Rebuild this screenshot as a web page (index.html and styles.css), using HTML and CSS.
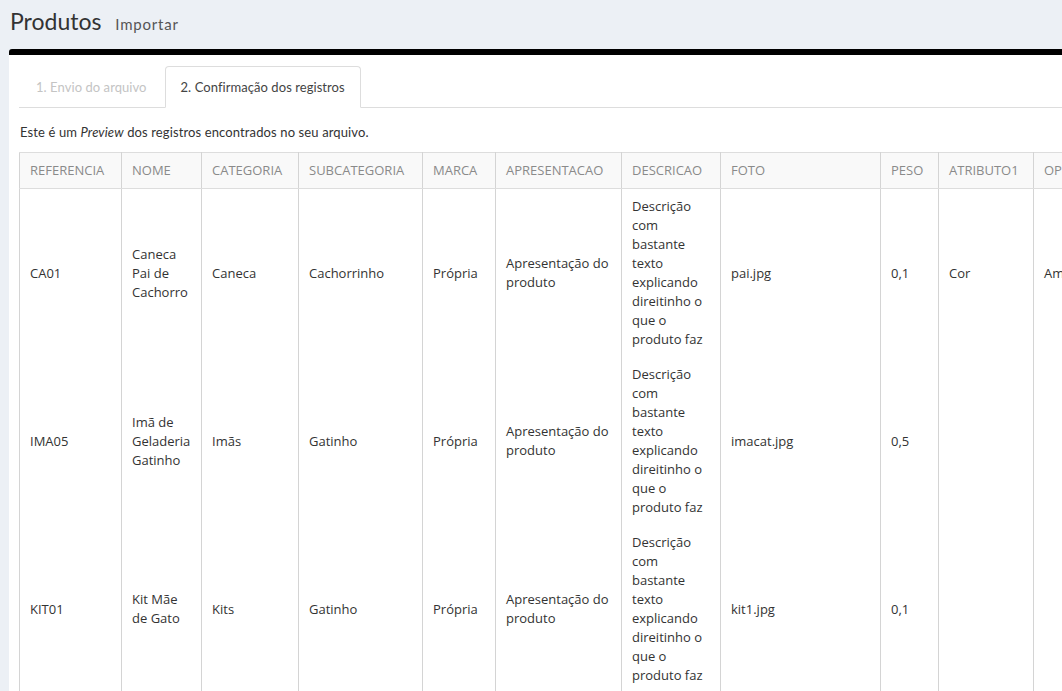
FILE: index.html
```html
<!DOCTYPE html>
<html lang="pt-BR">
<head>
<meta charset="utf-8">
<title>Produtos - Importar</title>
<link rel="stylesheet" href="styles.css">
</head>
<body>
<header class="page-header">
  <h1 class="title">Produtos <small class="subtitle">Importar</small></h1>
</header>
<section class="box">
  <ul class="tabs">
    <li class="tab">1. Envio do arquivo</li>
    <li class="tab active">2. Confirmação dos registros</li>
  </ul>
  <p class="intro">Este é um <em>Preview</em> dos registros encontrados no seu arquivo.</p>
  <table class="grid">
    <colgroup>
      <col class="c1"><col class="c2"><col class="c3"><col class="c4"><col class="c5"><col class="c6"><col class="c7"><col class="c8"><col class="c9"><col class="c10"><col class="c11">
    </colgroup>
    <thead>
      <tr>
        <th>REFERENCIA</th><th>NOME</th><th>CATEGORIA</th><th>SUBCATEGORIA</th><th>MARCA</th><th>APRESENTACAO</th><th>DESCRICAO</th><th>FOTO</th><th>PESO</th><th>ATRIBUTO1</th><th>OPCAO1</th>
      </tr>
    </thead>
    <tbody>
      <tr>
        <td>CA01</td><td>Caneca Pai de Cachorro</td><td>Caneca</td><td>Cachorrinho</td><td>Própria</td><td>Apresentação do produto</td><td>Descrição com bastante texto explicando direitinho o que o produto faz</td><td>pai.jpg</td><td>0,1</td><td>Cor</td><td>Amarelo</td>
      </tr>
      <tr>
        <td>IMA05</td><td>Imã de Geladeria Gatinho</td><td>Imãs</td><td>Gatinho</td><td>Própria</td><td>Apresentação do produto</td><td>Descrição com bastante texto explicando direitinho o que o produto faz</td><td>imacat.jpg</td><td>0,5</td><td></td><td></td>
      </tr>
      <tr>
        <td>KIT01</td><td>Kit Mãe de Gato</td><td>Kits</td><td>Gatinho</td><td>Própria</td><td>Apresentação do produto</td><td>Descrição com bastante texto explicando direitinho o que o produto faz</td><td>kit1.jpg</td><td>0,1</td><td></td><td></td>
      </tr>
    </tbody>
  </table>
</section>
</body>
</html>
```
FILE: styles.css
```css
html, body {
  margin: 0;
  padding: 0;
  overflow: hidden;
  background: #ecf0f5;
  font-family: "Lato", "Open Sans", sans-serif;
  color: #333;
}

.page-header {
  padding: 7px 10px 0 10px;
  height: 42px;
}

.title {
  margin: 0;
  font-weight: 400;
  font-size: 23px;
  line-height: 28px;
  color: #333;
}

.subtitle {
  font-size: 15px;
  color: #555;
  margin-left: 8px;
  letter-spacing: 0.8px;
}

.box {
  margin-left: 9px;
  width: 1400px;
  background: #fff;
  border-top: 6px solid #000;
  border-top-left-radius: 3px;
  padding: 11px 10px 0 10px;
  min-height: 700px;
}

.tabs {
  list-style: none;
  margin: 0;
  padding: 0 0 0 1px;
  display: flex;
  border-bottom: 1px solid #ddd;
  width: 1200px;
}

.tab {
  font-size: 13px;
  line-height: 20px;
  padding: 10px 15px 10px 15px;
  margin-right: 2px;
  margin-bottom: -1px;
  color: #c4c4c4;
  border: 1px solid transparent;
  border-radius: 4px 4px 0 0;
  letter-spacing: 0.06px;
}

.tab.active {
  color: #444;
  background: #fff;
  border-color: #ddd;
  border-bottom-color: #fff;
}

.intro {
  margin: 15px 0 11px 1px;
  font-size: 13px;
  line-height: 18px;
  color: #333;
  letter-spacing: 0.12px;
}

.grid {
  border-collapse: collapse;
  table-layout: fixed;
  width: 1110px;
  font-family: "Open Sans", "Noto Sans", sans-serif;
  font-size: 13px;
  line-height: 19px;
}

.c1 { width: 102px; }
.c2 { width: 80px; }
.c3 { width: 97px; }
.c4 { width: 124px; }
.c5 { width: 73px; }
.c6 { width: 126px; }
.c7 { width: 99px; }
.c8 { width: 160px; }
.c9 { width: 58px; }
.c10 { width: 95px; }
.c11 { width: 96px; }

.grid th,
.grid td {
  padding: 8px 10px;
  border-left: 1px solid #d4d4d4;
  border-right: 1px solid #d4d4d4;
  text-align: left;
  vertical-align: middle;
  white-space: normal;
}

.grid th {
  font-weight: 400;
  color: #8a8a8a;
  background: #f9f9f9;
  border-top: 1px solid #ddd;
  border-bottom: 1px solid #ddd;
  white-space: nowrap;
  overflow: hidden;
}

.grid td {
  color: #333;
}
```
